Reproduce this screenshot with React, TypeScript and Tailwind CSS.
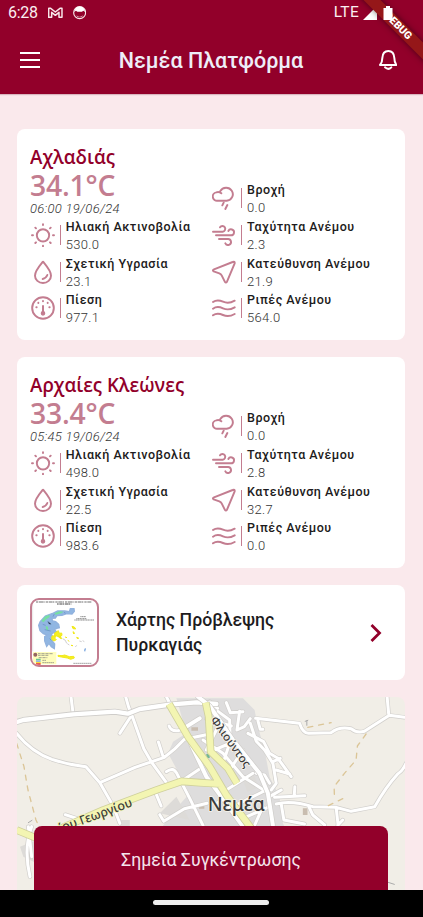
import React from "react";

type IconProps = { box: string; children: React.ReactNode };

function Icon({ box, children }: IconProps) {
  return (
    <svg viewBox={box} className="mt-[5px] size-6 shrink-0" fill="none" stroke="#c37d90" strokeWidth="5.8" strokeLinecap="round" strokeLinejoin="round">
      {children}
    </svg>
  );
}

const SunIcon = () => (
  <Icon box="62 24 72 72">
    <circle cx="98" cy="61" r="18.5" />
    <path d="M98 28v2M98 92v2M65 61h3M128 61h3M75 38l2 2M119 82l2 2M75 84l2-2M119 40l2-2" />
  </Icon>
);
const DropIcon = () => (
  <Icon box="62 134 72 72">
    <path d="M98 139C91 148 74 166 74 181a24 22 0 0 0 48 0C122 166 105 148 98 139Z" />
    <path d="M97 191Q107 189 111 179" />
  </Icon>
);
const GaugeIcon = () => (
  <Icon box="62 244 72 72">
    <circle cx="98" cy="280" r="32.500" />
    <path d="M98 274v20" strokeWidth="6" />
    <circle cx="98" cy="296" r="4" fill="#c37d90" />
    <path d="M98 259v1M84 264v1M112 264v1M78 278h1M117 278h1" />
  </Icon>
);
const RainIcon = () => (
  <Icon box="22 34 72 72">
    <path d="M50 56Q43 50 35 53A12.500 12.500 0 0 0 39 78H66A20 19.500 0 1 0 47 49" />
    <path d="M57 84l-4 8M68 91l-6 12" />
  </Icon>
);
const WindIcon = () => (
  <Icon box="22 144 72 72">
    <path d="M25 170H54A8.500 8.500 0 1 0 46 157M34 181H79A9 9 0 1 0 71 168M43 192H69A9 9 0 1 1 62 205" />
  </Icon>
);
const ArrowIcon = () => (
  <Icon box="22 254 72 72">
    <path d="M84 260Q91 257 90 264L67 319Q63 325 60 318L51 300Q49 296 44 294L27 288Q22 285 28 282Z" />
  </Icon>
);
const WavesIcon = () => (
  <Icon box="22 364 72 72">
    <path d="M25 382C36 374 44 376 55 381S76 386 90 378M25 402C36 394 44 396 55 401S76 406 90 398M25 422C36 414 44 416 55 421S76 426 90 418" />
  </Icon>
);

function Metric({ icon, label, value }: { icon: React.ReactNode; label: string; value: string }) {
  return (
    <div className="flex h-[36.6px]">
      {icon}
      <div className="mt-[7px] ml-[5px] h-5 w-px shrink-0 bg-[#c37d90]" />
      <div className="ml-[5px] whitespace-nowrap leading-[18px]">
        <div className="text-[12.500px] font-medium tracking-[0.500px] text-[#1d1b20]">{label}</div>
        <div className="text-[13px] font-light tracking-[0.300px] text-[#333]">{value}</div>
      </div>
    </div>
  );
}

type Station = { name: string; temp: string; time: string; v: string[] };

function StationCard({ s }: { s: Station }) {
  return (
    <section className="flex h-[211px] rounded-lg bg-white pl-[13px]">
      <div className="w-[182px] shrink-0 pt-[14px]">
        <h2 className="h-[26px] origin-left scale-x-[0.960] whitespace-nowrap font-['Open_Sans',sans-serif] text-[19.500px] leading-[28px] font-semibold text-[#92002a]">
          {s.name}
        </h2>
        <div className="h-[31px] origin-left scale-x-[0.960] whitespace-nowrap font-['Open_Sans',sans-serif] text-[29.500px] leading-[31px] font-semibold tracking-[-0.200px] text-[#c37d90]">
          {s.temp}
        </div>
        <div className="h-[18px] whitespace-nowrap text-[13px] leading-[17px] font-light tracking-[0.280px] text-[#333] italic">{s.time}</div>
        <div className="pl-[0.700px]">
          <Metric icon={<SunIcon />} label="Ηλιακή Ακτινοβολία" value={s.v[0]} />
          <Metric icon={<DropIcon />} label="Σχετική Υγρασία" value={s.v[1]} />
          <Metric icon={<GaugeIcon />} label="Πίεση" value={s.v[2]} />
        </div>
      </div>
      <div className="pt-[52.400px]">
        <Metric icon={<RainIcon />} label="Βροχή" value={s.v[3]} />
        <Metric icon={<WindIcon />} label="Ταχύτητα Ανέμου" value={s.v[4]} />
        <Metric icon={<ArrowIcon />} label="Κατεύθυνση Ανέμου" value={s.v[5]} />
        <Metric icon={<WavesIcon />} label="Ριπές Ανέμου" value={s.v[6]} />
      </div>
    </section>
  );
}

const stations: Station[] = [
  {
    name: "Αχλαδιάς",
    temp: "34.1°C",
    time: "06:00 19/06/24",
    v: ["530.0", "23.1", "977.1", "0.0", "2.3", "21.9", "564.0"],
  },
  {
    name: "Αρχαίες Κλεώνες",
    temp: "33.4°C",
    time: "05:45 19/06/24",
    v: ["498.0", "22.5", "983.6", "0.0", "2.8", "32.7", "0.0"],
  },
];

function FireMapThumb() {
  return (
    <div className="size-[69px] shrink-0 overflow-hidden rounded-[9px] border-2 border-[#c37d90] bg-white">
      <svg viewBox="24 14 195 195" className="size-full">
        <path d="M36 20H203" stroke="#555" strokeWidth="2.500" strokeDasharray="7 2 12 1 4 3" />
        <path d="M99 26H142" stroke="#444" strokeWidth="3" strokeDasharray="5 2 9 1" />
        <path d="M26 30V168" stroke="#bbb" strokeWidth="1" />
        <path d="M49 78L64 62 88 53 101 47 122 47 136 49 139 40 150 40 151 48 144 56 128 55 114 60 99 61 94 68 83 69 86 77 95 79 104 87 106 97 98 99 91 103 98 110 86 113 82 119 90 128 84 136 92 146 91 160 82 154 75 144 68 153 62 137 62 124 70 119 58 115 48 106 44 90Z" fill="#91b6e2" stroke="#91b2de" strokeWidth="4" />
        <path d="M52 77L64 63 76 58 77 65 65 73 59 81ZM91 54l15-6 13 1-7 5-17 4ZM65 92l7 2 1 12-7-4Z" fill="#76dfa2" />
        <path d="M56 87l9 3M71 78l4 8 7 1M62 103l18 4M77 130l5 5M87 64l4-8M121 50l3 5" stroke="#638dc0" strokeWidth="2" />
        <path d="M84 122l10-1-1 8 4 4-7 4-7-5ZM92 113l11-7 3 8 7-1 1 7-7 5-9-3-6 1ZM102 122l7 1 4 7-6-2ZM102 180l12 1 8-2 14 5 13-1 2 5-11 4-10-4-18-3-10-2ZM144 93l7 2 4 6-8-1ZM147 109l5 4-3 3ZM158 126l6 2-3 3ZM123 125l6 2M131 135l5 3M141 150l6 1Z" fill="#f6ef22" stroke="#f0e81c" strokeWidth="3" />
        <path d="M116 130l8 5 4 9M130 145l6 4M158 150l-4 5M166 137l7 2M176 136l5 3" stroke="#b5b3b6" strokeWidth="2" fill="none" />
        <path d="M180 165l3-7 3 2-3 10Z" fill="#78a5de" />
        <path d="M169 64h17M157 70h31M151 74h60" stroke="#555" strokeWidth="2" strokeDasharray="4 1" />
        <path d="M27 170H97V207H27Z" fill="#fffdbc" />
        <circle cx="34" cy="178" r="6" fill="#946663" />
        <path d="M42 175h45M42 180h31M44 187h26M55 195h12M55 202h35M148 204h54" stroke="#777" strokeWidth="2" strokeDasharray="7 1 3 1" />
        <path d="M36 190h14v5H36Z" fill="#68c895" />
        <path d="M36 195h14v5H36Z" fill="#93b8df" />
        <path d="M36 200h14v4H36Z" fill="#f5df38" />
        <path d="M36 204h14v4H36Z" fill="#e32831" />
      </svg>
    </div>
  );
}

const minorRoads =
  "M183 18L190 74M347 18L356 50L366 75L330 130M366 75L402 176 425 216 470 278M20 130Q63 185 126 208Q174 224 228 230L270 278 310 348 330 400M270 278L376 232 464 202Q497 178 524 148L590 134M446 156L460 200M478 108Q484 125 506 122L530 115M470 245Q490 230 500 248L540 325 580 406M440 314L454 348M450 374L462 394 524 356 592 340M166 374L215 390M525 267L580 230M600 186L660 160M590 86L665 108M625 64L660 90 662 160M650 38L662 68 700 65M690 64L682 120 704 110 722 86M745 92L752 118 760 118M722 100L740 154 765 180 790 220 800 280 785 300M715 130L762 155 780 190 805 205 845 260M800 240L840 252M790 215L812 205M780 280L765 255 740 250M580 150L640 190 700 260 770 305 M620 120L590 180M660 160L640 220M700 180L660 240M600 270L670 350 710 410M650 300L730 250M670 350L770 300M700 385L780 350M620 340L660 320M760 350L735 406M780 320L815 300M795 322L886 317M856 290L854 318M800 342Q845 330 910 350L980 352 1025 364 1096 350Q1130 290 1165 252Q1180 243 1190 220M898 350L910 375 946 405M980 352L986 406M815 342L823 390 885 402M985 406L1000 390M738 85L870 100Q880 130 897 130L965 128Q990 108 1025 116 1040 130 1065 124L1140 76 1185 82M1133 18L1138 72M55 410L65 500M65 410Q40 475 60 560M600 35L624 55M470 20L480 40";

function TownMap() {
  return (
    <svg viewBox="21 21 1166 579" preserveAspectRatio="none" className="block h-full w-full" fill="none" strokeLinecap="round" strokeLinejoin="round">
      <path d="M0 0H1200V600H0Z" fill="#f1eee7" />
      <path d="M500 25H700L735 60 745 110 765 180 780 260 810 320 820 400 830 420H450L500 355 540 310 475 190 490 155 530 130Z" fill="#dedddd" />
      <path d="M30 470L80 450V520L40 500ZM450 370L500 320 540 390ZM330 390h30v25h-30ZM700 270l35-12 12 35-34 12Z" fill="#dddbd8" />
      <path d="M545 112h20v10h-20ZM568 346h16v10h-16ZM880 355h14v20h-14Z" fill="#c9bdb0" />
      <path d="M590 192h10v12h-10Z" fill="#72b792" />
      <path d={minorRoads} stroke="#d1cfcc" strokeWidth="13" />
      <path d={minorRoads} stroke="#ffffff" strokeWidth="9" />
      <g stroke="#cfcdca">
        <path d="M10 99L40 90 190 73 315 65 354 71 390 57 480 44 560 37 620 42" strokeWidth="18" />
        <path d="M10 99L40 90 190 73 315 65 354 71 390 57 480 44 560 37 620 42" stroke="#fff" strokeWidth="13" />
        <path d="M565 20L600 48 670 150 750 250 775 310 790 405M545 165L590 260 650 340 700 410M530 110L570 85" strokeWidth="16" />
        <path d="M565 20L600 48 670 150 750 250 775 310 790 405M545 165L590 260 650 340 700 410M530 110L570 85" stroke="#fff" strokeWidth="12" />
      </g>
      <path d="M478 42L535 140 600 230 650 315 725 415M588 38L597 80 603 185 655 235 682 280M20 420L80 445M150 416L280 360 440 300 515 274 570 278 635 282" stroke="#cfd09c" strokeWidth="23" strokeLinecap="butt" />
      <path d="M478 42L535 140 600 230 650 315 725 415M588 38L597 80 603 185 655 235 682 280M20 420L80 445M150 416L280 360 440 300 515 274 570 278 635 282" stroke="#f3f5b2" strokeWidth="18" strokeLinecap="butt" />
      <path d="M20 160L42 230 54 300 78 390 85 405M895 112L965 98M1070 132L1044 168 1040 210 1005 250 974 290 975 320M1000 326L950 350" stroke="#dbc597" strokeWidth="4" strokeDasharray="15 18" />
      <path d="M892 92v14M887 94l8-3M55 398l11-7M1100 580l30-5 25 8" stroke="#aaa" strokeWidth="3" />
      <g fill="#3c3c3c" stroke="#f7f5ee" strokeWidth="5" paintOrder="stroke" fontFamily="Noto Sans, sans-serif">
        <text x="594" y="364" fontSize="60" fontWeight="500" textLength="172" lengthAdjust="spacingAndGlyphs">Νεμέα</text>
        <text transform="translate(601 90) rotate(54)" fontSize="34" fontWeight="500" textLength="180" lengthAdjust="spacingAndGlyphs">Φλιούντος</text>
        <text transform="translate(150 428) rotate(-20)" fontSize="37" fontWeight="500" stroke="#f3f5b2" textLength="234" lengthAdjust="spacingAndGlyphs">ίου Γεωργίου</text>
      </g>
    </svg>
  );
}

export default function App() {
  return (
    <div className="relative flex h-[917px] w-[423px] flex-col overflow-hidden bg-[#fae9ec] font-[Roboto,sans-serif]">
      <header className="h-[94px] shrink-0 bg-[#92002a] text-white shadow-[0_1px_1px_#d9b6bf]">
        <div className="flex h-[26px] items-center pl-2">
          <span className="w-[40px] text-[16px] leading-none tracking-[-0.300px] text-[#fbeef1]">6:28</span>
          <svg viewBox="145 18 45 40" className="h-[13.300px] w-[15px]" fill="none" stroke="#f8e6e9" strokeWidth="4.500" strokeLinejoin="round">
            <path d="M147 52V25H153L167 36 181 25H187V52H178V37L167 46 156 37V52Z" />
          </svg>
          <svg viewBox="219 18 40 40" className="ml-[10px] size-[13.300px]">
            <circle cx="239" cy="38" r="18" fill="none" stroke="#f8e6e9" strokeWidth="3.500" />
            <path d="M222 36L227 24Q239 15 251 24L256 36 250 32 246 35H232L228 32Z" fill="#fff" />
            <path d="M229 46Q239 55 249 46L246 52H232Z" fill="#d59cab" />
          </svg>
          <span className="ml-auto text-[15.500px] leading-none tracking-[0.300px] text-[#fbeef1]">LTE</span>
          <svg viewBox="0 0 14 14" className="ml-1 size-[14px]"><path d="M14 0V14H0Z" fill="#fff" /></svg>
          <svg viewBox="0 0 10 14" className="z-20 mr-[30px] ml-[6px] h-[14px] w-[10px]"><path d="M3 0H7V2H9.500V14H.5V2H3Z" fill="#fff" /></svg>
        </div>
        <div className="flex h-[68px] items-center px-5">
          <div className="flex h-4 w-5 flex-col justify-between">
            <i className="h-[2px] bg-white" />
            <i className="h-[2px] bg-white" />
            <i className="h-[2px] bg-white" />
          </div>
          <h1 className="flex-1 pt-[2px] pl-[3px] text-center text-[21.500px] leading-7 font-medium text-[#eeeef8]">Νεμέα Πλατφόρμα</h1>
          <svg viewBox="500 150 54 60" className="mr-[6px] h-5 w-[18px]" fill="none" stroke="#fff" strokeWidth="6" strokeLinecap="round" strokeLinejoin="round">
            <path d="M503 195Q510 187 510 174Q511 153 528 153T546 174Q546 187 552 195ZM518 202Q528 211 537 202" />
          </svg>
        </div>
      </header>
      <div className="absolute top-0 right-0 z-10 size-[70px] overflow-hidden">
        <div className="absolute top-[19.500px] left-[-15.500px] h-3 w-[120px] rotate-45 bg-[#951719] text-center text-[10.500px] leading-[12px] font-black text-white shadow-[0_0_6px_#00000080]">DEBUG</div>
      </div>
      <main className="flex min-h-0 flex-1 flex-col gap-[17px] overflow-hidden pt-[35px] pr-[18px] pl-[17px]">
        {stations.map((s) => (
          <StationCard key={s.name} s={s} />
        ))}
        <section className="flex h-[95px] shrink-0 items-center rounded-lg bg-white pl-[13px]">
          <FireMapThumb />
          <p className="ml-[17px] text-[17.700px] leading-[25px] font-medium text-[#1d1b20]">
            Χάρτης Πρόβλεψης
            <br />
            Πυρκαγιάς
          </p>
          <svg viewBox="0 0 12 20" className="mr-[23px] ml-auto h-[20px] w-[12px]" fill="none" stroke="#92002a" strokeWidth="2.800">
            <path d="M1.500 2L9.500 10L1.500 18" />
          </svg>
        </section>
        <section className="relative min-h-0 flex-1 overflow-hidden rounded-t-lg">
          <TownMap />
          <button className="absolute right-[17px] bottom-0 left-[17px] h-16 rounded-t-lg bg-[#92002a] pt-[5px] text-[17.700px] text-[#f5e4ed]">
            Σημεία Συγκέντρωσης
          </button>
        </section>
      </main>
      <footer className="flex h-[27px] shrink-0 justify-center bg-black pt-[10px] pr-[2px]">
        <div className="h-[5px] w-[116px] rounded-full bg-[#eee]" />
      </footer>
    </div>
  );
}
